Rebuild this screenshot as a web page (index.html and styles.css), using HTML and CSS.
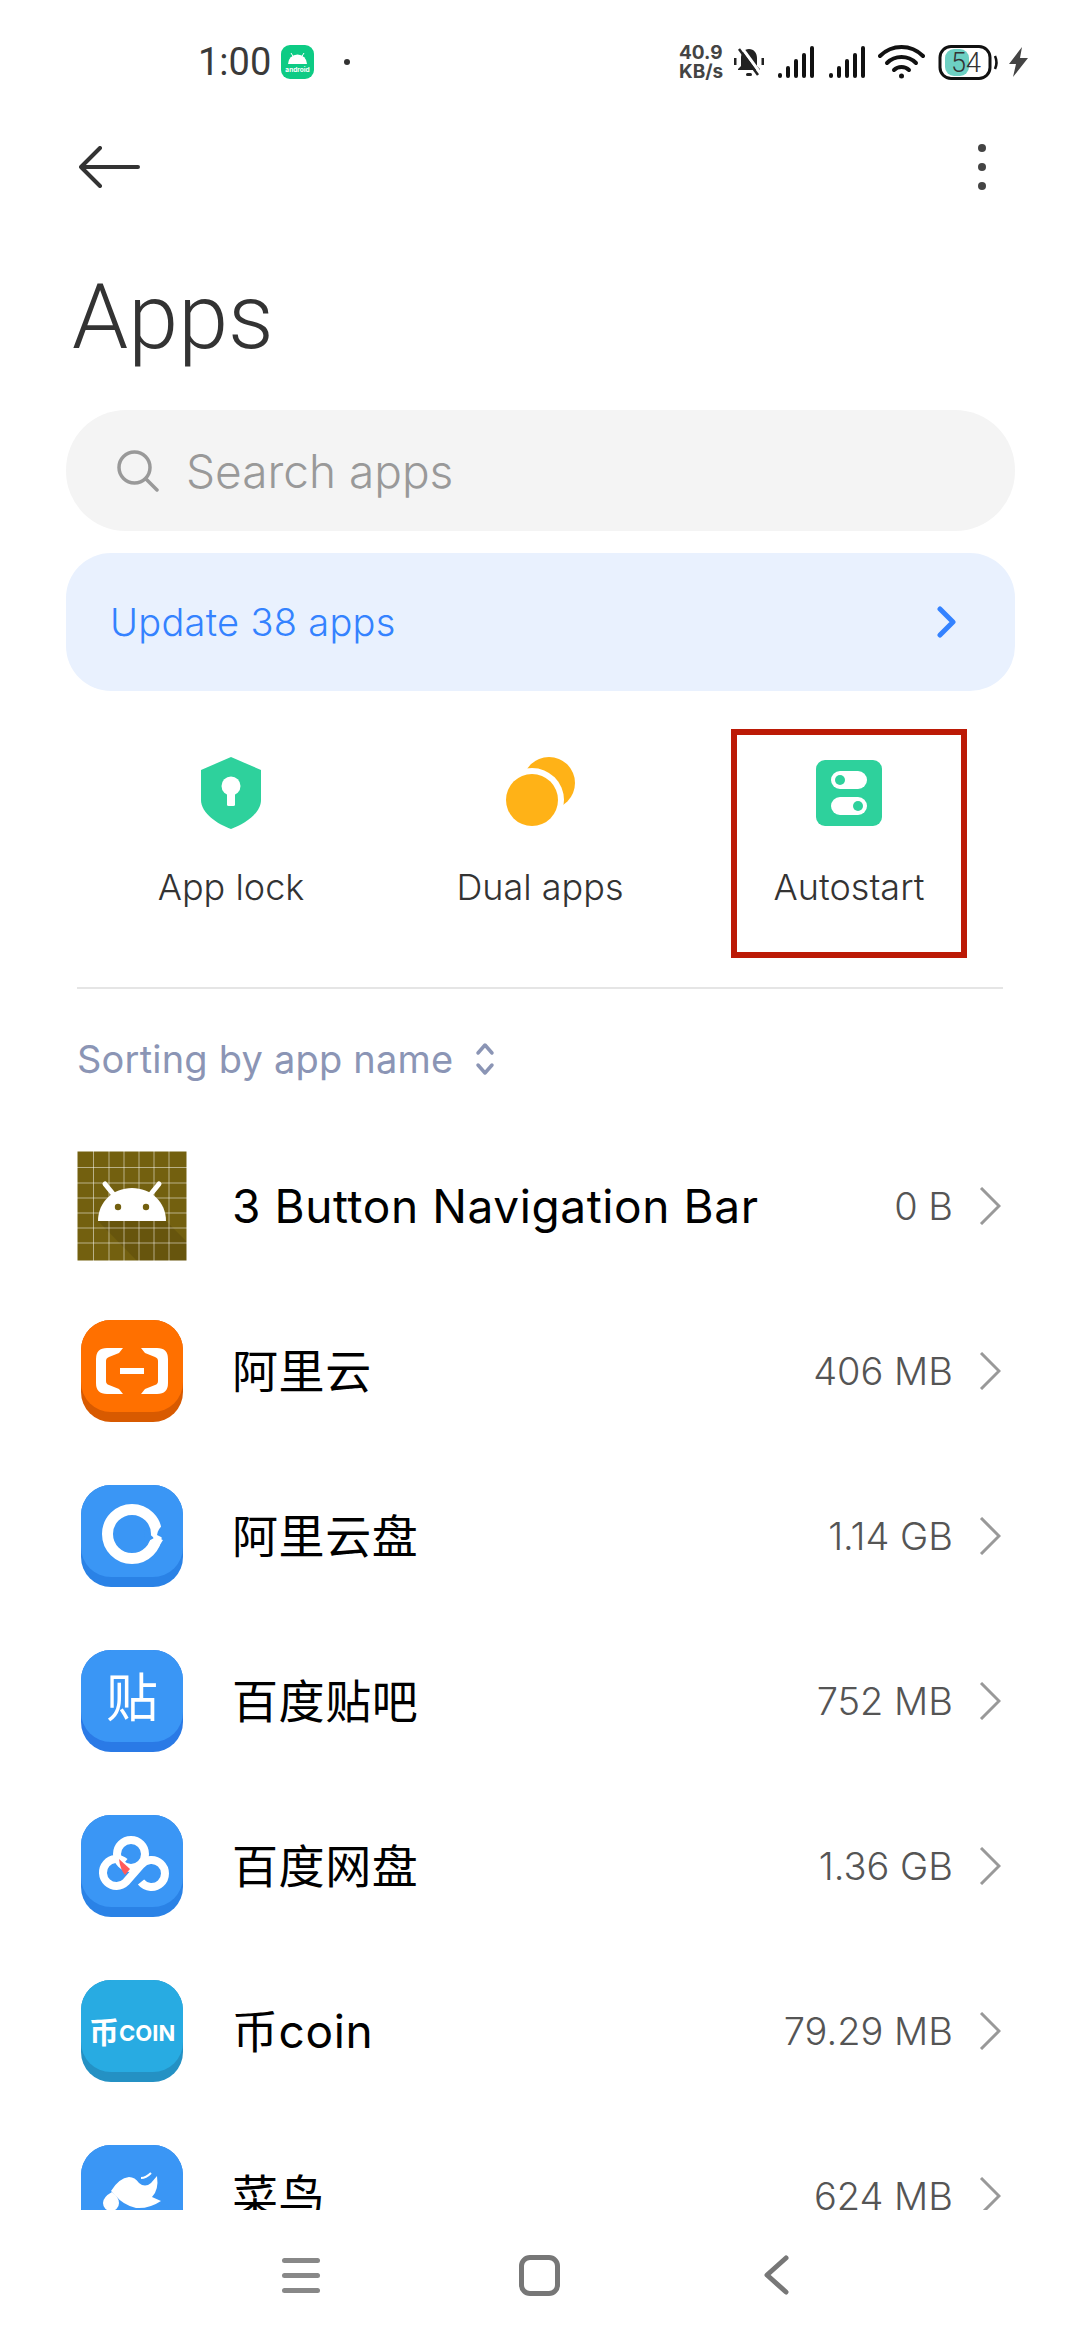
FILE: index.html
```html
<!DOCTYPE html>
<html lang="en">
<head>
  <meta charset="UTF-8" />
  <title>Apps</title>
  <meta name="viewport" content="width=device-width, initial-scale=1.0" />
  <link rel="stylesheet" href="styles.css">
</head>
<body>
  <div class="status-bar">
    <span class="clock">1:00</span>
    <svg class="status-app" viewBox="0 0 33 34">
      <rect width="33" height="34" rx="9" fill="#0dcb84"/>
      <path d="M7 19a9.500 9.500 0 0 1 19 0z" fill="#fff"/>
      <path d="M10 8l2.500 4M23 8l-2.500 4" stroke="#fff" stroke-width="1"/>
      <text x="16.500" y="26.500" class="status-app-text">android</text>
    </svg>
    <span class="status-dot"></span>
    <div class="status-right">
      <div class="net-speed"><span>40.9</span><span>KB/s</span></div>
      <svg class="bell" viewBox="0 0 30 31">
        <path d="M15 2c-5 0-8 4-8 9v8l-3 3v1h22v-1l-3-3v-8c0-5-3-9-8-9z" fill="#222"/>
        <rect x="12" y="26" width="6" height="3" rx="1.500" fill="#222"/>
        <rect x="0" y="11" width="2.500" height="7" fill="#222"/>
        <rect x="27.500" y="11" width="2.500" height="7" fill="#222"/>
        <path d="M8 1l19 26" stroke="#fff" stroke-width="3"/>
        <path d="M5 2l19 26" stroke="#222" stroke-width="2.500"/>
      </svg>
      <svg class="signal" viewBox="0 0 38 32" fill="#111">
        <rect x="0" y="27" width="4" height="5" rx="2"/>
        <rect x="8" y="20" width="4" height="12" rx="2"/>
        <rect x="16" y="13" width="4" height="19" rx="2"/>
        <rect x="24" y="7" width="4" height="25" rx="2"/>
        <rect x="32" y="0" width="4" height="32" rx="2"/>
      </svg>
      <svg class="signal" viewBox="0 0 38 32" fill="#111">
        <rect x="0" y="27" width="4" height="5" rx="2"/>
        <rect x="8" y="20" width="4" height="12" rx="2"/>
        <rect x="16" y="13" width="4" height="19" rx="2"/>
        <rect x="24" y="7" width="4" height="25" rx="2"/>
        <rect x="32" y="0" width="4" height="32" rx="2"/>
      </svg>
      <svg class="wifi" viewBox="0 0 47 34" fill="none" stroke="#111" stroke-width="4" stroke-linecap="round">
        <path d="M2 11C14 -1 33 -1 45 11"/>
        <path d="M9 18C17 10 30 10 38 18"/>
        <path d="M16 25C20 21 27 21 31 25"/>
        <circle cx="23.500" cy="31" r="2.500" fill="#111" stroke="none"/>
      </svg>
      <svg class="battery" viewBox="0 0 62 35">
        <rect x="7" y="4" width="24" height="27" rx="9" fill="#6dd0c3"/>
        <rect x="2" y="1.500" width="50" height="32" rx="11" fill="none" stroke="#111" stroke-width="3"/>
        <path d="M57 11q3 6.500 0 13" fill="none" stroke="#111" stroke-width="2.500"/>
        <text x="28" y="27" class="battery-text">54</text>
      </svg>
      <svg class="bolt" viewBox="0 0 19 30">
        <path d="M13 0L0 17h7L4 30l15-19h-8z" fill="#444"/>
      </svg>
    </div>
  </div>

  <div class="toolbar">
    <svg class="back-arrow" viewBox="0 0 61 42" fill="none" stroke="#333" stroke-width="4" stroke-linecap="round" stroke-linejoin="round">
      <path d="M21 2L2 21l19 19M2 21h57"/>
    </svg>
    <div class="more-dots"><span></span><span></span><span></span></div>
  </div>

  <h1 class="page-title">Apps</h1>

  <div class="search-box">
    <svg class="search-icon" viewBox="0 0 42 42" fill="none" stroke="#999" stroke-width="3.500" stroke-linecap="round">
      <circle cx="17.500" cy="17.500" r="15.500"/>
      <path d="M29 29l11 11"/>
    </svg>
    <span>Search apps</span>
  </div>

  <div class="update-bar">
    <span>Update 38 apps</span>
    <svg class="update-arrow" viewBox="0 0 20 32" fill="none" stroke="#3482ff" stroke-width="5" stroke-linecap="round" stroke-linejoin="round">
      <path d="M3 3l13 13L3 29"/>
    </svg>
  </div>

  <div class="shortcuts">
    <div class="shortcut">
      <svg class="shortcut-icon" viewBox="0 0 72 72">
        <path d="M36 0l30 13v30c0 13-16 24-30 29C22 67 6 56 6 43V13z" fill="#2ed19c"/>
        <circle cx="36" cy="29" r="9.500" fill="#fff"/>
        <rect x="32" y="30" width="8" height="19" rx="1.500" fill="#fff"/>
      </svg>
      <span>App lock</span>
    </div>
    <div class="shortcut">
      <svg class="shortcut-icon" viewBox="0 0 72 72">
        <circle cx="45" cy="26" r="26" fill="#ffb217"/>
        <circle cx="28" cy="43" r="32" fill="#fff"/>
        <circle cx="28" cy="43" r="26" fill="#ffb217"/>
      </svg>
      <span>Dual apps</span>
    </div>
    <div class="shortcut shortcut-marked">
      <svg class="shortcut-icon" viewBox="0 0 72 72">
        <rect x="3" y="3" width="66" height="66" rx="9" fill="#2ed19c"/>
        <rect x="18" y="14" width="36" height="18" rx="9" fill="#fff"/>
        <circle cx="27" cy="23" r="5" fill="#2ed19c"/>
        <rect x="18" y="40" width="36" height="18" rx="9" fill="#fff"/>
        <circle cx="45" cy="49" r="5" fill="#2ed19c"/>
      </svg>
      <span>Autostart</span>
    </div>
  </div>

  <div class="divider"></div>

  <div class="sort-row">
    <span>Sorting by app name</span>
    <svg class="sort-icon" viewBox="0 0 20 34" fill="none" stroke="#8b95b5" stroke-width="3.500" stroke-linecap="round" stroke-linejoin="round">
      <path d="M3 11l7-8 7 8M3 23l7 8 7-8"/>
    </svg>
  </div>

  <div class="app-list">
    <div class="app-row">
      <svg class="app-icon app-icon-large" viewBox="0 0 110 110">
        <rect width="110" height="110" fill="#73600f"/>
        <path d="M21 70h68l21 21v19H60z" fill="#5f4f0b" opacity="0.6"/>
        <path d="M0.500 0v110M16.500 0v110M32 0v110M47 0v110M62 0v110M77 0v110M92 0v110M109.500 0v110M0 0.500h110M0 16.500h110M0 32h110M0 47h110M0 62h110M0 77h110M0 92h110M0 109.500h110" stroke="#fff" stroke-opacity="0.5" stroke-width="1"/>
        <path d="M21 70c0-19 15-33 34-33s34 14 34 33z" fill="#fff"/>
        <path d="M28 33l9 11M82 33l-9 11" stroke="#fff" stroke-width="5" stroke-linecap="round"/>
        <circle cx="41" cy="56" r="3.200" fill="#73600f"/>
        <circle cx="69" cy="56" r="3.200" fill="#73600f"/>
      </svg>
      <span class="app-name">3 Button Navigation Bar</span>
      <span class="app-size">0 B</span>
      <svg class="row-arrow" viewBox="0 0 22 38" fill="none" stroke="#999" stroke-width="3">
        <path d="M2 1l18 18L2 37"/>
      </svg>
    </div>

    <div class="app-row">
      <svg class="app-icon" viewBox="0 0 102 102">
        <rect width="102" height="102" rx="30" fill="#d85a00"/>
        <rect width="102" height="92" rx="30" fill="#ff7000"/>
        <path d="M42 28H26Q15 28 15 39V63Q15 74 26 74H42L38 69L28 65Q25 64 25 61V41Q25 38 28 37L38 33Z" fill="#fff"/>
        <path d="M60 28H76Q87 28 87 39V63Q87 74 76 74H60L64 69L74 65Q77 64 77 61V41Q77 38 74 37L64 33Z" fill="#fff"/>
        <rect x="39" y="48" width="24" height="6" fill="#fff"/>
      </svg>
      <span class="app-name app-name-cjk">阿里云</span>
      <span class="app-size">406 MB</span>
      <svg class="row-arrow" viewBox="0 0 22 38" fill="none" stroke="#999" stroke-width="3">
        <path d="M2 1l18 18L2 37"/>
      </svg>
    </div>

    <div class="app-row">
      <svg class="app-icon" viewBox="0 0 102 102">
        <rect width="102" height="102" rx="30" fill="#2a82e6"/>
        <rect width="102" height="92" rx="30" fill="#3a96f5"/>
        <circle cx="51" cy="49" r="24.500" fill="none" stroke="#fff" stroke-width="11"/>
        <path d="M84 38Q77 43 76 50L84 54Z" fill="#3a96f5"/>
        <path d="M63 44L73 53L64 58Z" fill="#3a96f5"/>
        <path d="M72 52L82 55L77 63Z" fill="#fff"/>
      </svg>
      <span class="app-name app-name-cjk">阿里云盘</span>
      <span class="app-size">1.14 GB</span>
      <svg class="row-arrow" viewBox="0 0 22 38" fill="none" stroke="#999" stroke-width="3">
        <path d="M2 1l18 18L2 37"/>
      </svg>
    </div>

    <div class="app-row">
      <svg class="app-icon" viewBox="0 0 102 102">
        <rect width="102" height="102" rx="30" fill="#2a7ae6"/>
        <rect width="102" height="92" rx="30" fill="#3a96f5"/>
        <text x="51" y="67" class="icon-glyph">贴</text>
      </svg>
      <span class="app-name app-name-cjk">百度贴吧</span>
      <span class="app-size">752 MB</span>
      <svg class="row-arrow" viewBox="0 0 22 38" fill="none" stroke="#999" stroke-width="3">
        <path d="M2 1l18 18L2 37"/>
      </svg>
    </div>

    <div class="app-row">
      <svg class="app-icon" viewBox="0 0 102 102">
        <rect width="102" height="102" rx="30" fill="#2a82e6"/>
        <rect width="102" height="92" rx="30" fill="#3a96f5"/>
        <g fill="none" stroke="#fff" stroke-width="8">
          <circle cx="50" cy="39" r="14"/>
          <path d="M44 47A13.500 13.500 0 1 0 45 67L60 50A13.500 13.500 0 1 1 60 67"/>
        </g>
        <path d="M38 44L49 54L44 60Q39 54 38 44Z" fill="#ff5a5a"/>
      </svg>
      <span class="app-name app-name-cjk">百度网盘</span>
      <span class="app-size">1.36 GB</span>
      <svg class="row-arrow" viewBox="0 0 22 38" fill="none" stroke="#999" stroke-width="3">
        <path d="M2 1l18 18L2 37"/>
      </svg>
    </div>

    <div class="app-row">
      <svg class="app-icon" viewBox="0 0 102 102">
        <rect width="102" height="102" rx="30" fill="#2491c4"/>
        <rect width="102" height="92" rx="30" fill="#28abe2"/>
        <text x="8" y="63" class="coin-glyph">币</text>
        <text x="38" y="61" class="coin-text">COIN</text>
      </svg>
      <span class="app-name app-name-cjk">币coin</span>
      <span class="app-size">79.29 MB</span>
      <svg class="row-arrow" viewBox="0 0 22 38" fill="none" stroke="#999" stroke-width="3">
        <path d="M2 1l18 18L2 37"/>
      </svg>
    </div>

    <div class="app-row">
      <svg class="app-icon" viewBox="0 0 102 102">
        <rect width="102" height="102" rx="30" fill="#2a82e6"/>
        <rect width="102" height="92" rx="30" fill="#3a96f5"/>
        <path d="M30 46Q38 33 48 32Q54 32 58 38Q64 43 70 38L76 31Q78 45 71 52L80 56Q68 64 55 63Q42 60 34 50Z" fill="#fff"/>
        <path d="M31 47Q38 52 38 58A8 8 0 0 1 22 58Q22 52 31 47Z" fill="#fff"/>
        <path d="M60 33Q65 33 70 28" fill="none" stroke="#fff" stroke-width="2"/>
      </svg>
      <span class="app-name app-name-cjk">菜鸟</span>
      <span class="app-size">624 MB</span>
      <svg class="row-arrow" viewBox="0 0 22 38" fill="none" stroke="#999" stroke-width="3">
        <path d="M2 1l18 18L2 37"/>
      </svg>
    </div>
  </div>

  <div class="nav-bar">
    <div class="nav-menu"><span></span><span></span><span></span></div>
    <div class="nav-home"></div>
    <svg class="nav-back" viewBox="0 0 25 40" fill="none" stroke="#777" stroke-width="5" stroke-linecap="round" stroke-linejoin="round">
      <path d="M22 3L3 20l19 17"/>
    </svg>
  </div>
</body>
</html>
```

FILE: styles.css
```css
* {
  box-sizing: border-box;
}

body {
  margin: 0;
  width: 1080px;
  height: 2340px;
  display: flex;
  flex-direction: column;
  overflow: hidden;
  background-color: #fff;
  font-family: Inter, "Noto Sans CJK SC", sans-serif;
}

/* status bar */
.status-bar {
  height: 124px;
  flex-shrink: 0;
  display: flex;
  align-items: center;
  padding: 0 52px 0 198px;
}

.clock {
  font-family: Roboto, sans-serif;
  font-size: 38px;
  font-weight: 400;
  color: #3a3a3a;
}

.status-app {
  width: 33px;
  height: 34px;
  margin-left: 10px;
}

.status-app-text {
  font-size: 6.500px;
  font-weight: 700;
  fill: #fff;
  text-anchor: middle;
}

.status-dot {
  width: 6px;
  height: 6px;
  margin-left: 30px;
  border-radius: 50%;
  background-color: #333;
}

.status-right {
  margin-left: auto;
  display: flex;
  align-items: center;
}

.net-speed {
  width: 55px;
  display: flex;
  flex-direction: column;
  font-size: 19px;
  line-height: 19px;
  font-weight: 700;
  color: #444;
}

.bell {
  width: 30px;
  height: 31px;
}

.signal {
  width: 38px;
  height: 32px;
  margin-left: 14px;
}

.signal + .signal {
  margin-left: 13px;
}

.wifi {
  width: 47px;
  height: 34px;
  margin-left: 11px;
}

.battery {
  width: 62px;
  height: 35px;
  margin-left: 13px;
}

.battery-text {
  font-family: Roboto, sans-serif;
  font-size: 27px;
  font-weight: 300;
  fill: #333;
  text-anchor: middle;
}

.bolt {
  width: 19px;
  height: 30px;
  margin-left: 9px;
}

/* toolbar */
.toolbar {
  height: 86px;
  flex-shrink: 0;
  display: flex;
  align-items: center;
  justify-content: space-between;
  padding: 0 94px 0 79px;
}

.back-arrow {
  width: 61px;
  height: 42px;
}

.more-dots {
  display: flex;
  flex-direction: column;
  gap: 11px;
}

.more-dots span {
  width: 8px;
  height: 8px;
  border-radius: 50%;
  background-color: #444;
}

.page-title {
  margin: 46px 0 30px;
  padding-left: 72px;
  font-family: Roboto, sans-serif;
  font-size: 90px;
  line-height: 124px;
  font-weight: 300;
  color: #333;
}

/* search and update */
.search-box {
  height: 121px;
  flex-shrink: 0;
  margin: 0 65px 0 66px;
  padding-left: 51px;
  display: flex;
  align-items: center;
  gap: 27px;
  border-radius: 60px;
  background-color: #f4f4f4;
  font-size: 46px;
  font-weight: 300;
  color: #999;
}

.search-icon {
  width: 42px;
  height: 42px;
}

.update-bar {
  height: 138px;
  flex-shrink: 0;
  margin: 22px 65px 0 66px;
  padding: 0 58px 0 44px;
  display: flex;
  align-items: center;
  justify-content: space-between;
  border-radius: 45px;
  background-color: #e9f1fe;
  font-size: 38px;
  font-weight: 300;
  letter-spacing: 0.3px;
  color: #3482ff;
}

.update-arrow {
  width: 20px;
  height: 32px;
}

/* shortcuts */
.shortcuts {
  margin-top: 38px;
  padding-left: 113px;
  display: grid;
  grid-template-columns: repeat(3, 236px);
  column-gap: 73px;
}

.shortcut {
  height: 229px;
  padding-top: 22px;
  display: flex;
  flex-direction: column;
  align-items: center;
  border: 6px solid transparent;
  font-size: 36px;
  font-weight: 300;
  line-height: 48px;
  color: #333;
}

.shortcut-marked {
  border-color: #bc1a06;
}

.shortcut-icon {
  width: 72px;
  height: 72px;
  margin-bottom: 34px;
  flex-shrink: 0;
}

.divider {
  height: 2px;
  flex-shrink: 0;
  margin: 29px 77px 0;
  background-color: #e5e5e5;
}

.sort-row {
  margin: 45px 0 39px;
  padding-left: 77px;
  display: flex;
  align-items: center;
  gap: 22px;
  font-size: 38px;
  letter-spacing: 0.2px;
  line-height: 50px;
  color: #8b95b5;
}

.sort-icon {
  width: 20px;
  height: 34px;
}

/* app list */
.app-list {
  flex: 1;
  min-height: 0;
  overflow: hidden;
}

.app-row {
  height: 165px;
  padding: 0 79px 0 77px;
  display: flex;
  align-items: center;
}

.app-icon {
  width: 102px;
  height: 102px;
  margin: 0 49px 0 4px;
  flex-shrink: 0;
}

.app-icon-large {
  width: 110px;
  height: 110px;
  margin: 0 45px 0 0;
}

.app-name {
  flex: 1;
  font-size: 46px;
  letter-spacing: 0.6px;
  color: #000;
}

/* noto sits lower than the latin face */
.app-name-cjk {
  padding-bottom: 6px;
}

.app-size {
  font-size: 38px;
  font-weight: 300;
  color: #555;
}

.row-arrow {
  width: 22px;
  height: 38px;
  margin-left: 26px;
}

.icon-glyph {
  font-size: 52px;
  font-weight: 400;
  fill: #fff;
  text-anchor: middle;
}

.coin-glyph {
  font-size: 30px;
  font-weight: 700;
  fill: #fff;
}

.coin-text {
  font-size: 22px;
  font-weight: 700;
  fill: #fff;
}

/* bottom nav */
.nav-bar {
  height: 130px;
  flex-shrink: 0;
  display: flex;
  align-items: center;
  padding-left: 282px;
}

.nav-menu {
  width: 38px;
  display: flex;
  flex-direction: column;
  gap: 10px;
}

.nav-menu span {
  height: 5px;
  border-radius: 3px;
  background-color: #888;
}

.nav-home {
  width: 41px;
  height: 41px;
  margin-left: 199px;
  border: 5px solid #777;
  border-radius: 11px;
}

.nav-back {
  width: 25px;
  height: 40px;
  margin-left: 204px;
}
```
